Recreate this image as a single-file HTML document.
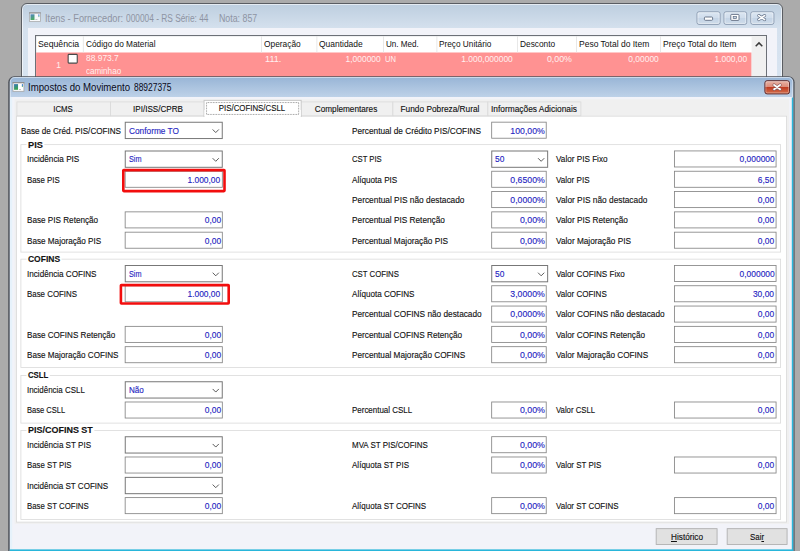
<!DOCTYPE html>
<html><head><meta charset="utf-8"><title>Impostos do Movimento</title>
<style>
html,body{margin:0;padding:0}
body{width:800px;height:551px;overflow:hidden;background:#ababab;position:relative;font-family:"Liberation Sans",sans-serif}
div,svg.abs{position:absolute;box-sizing:border-box}
.t{position:absolute;white-space:nowrap;line-height:12px;display:inline-block;color:#111;-webkit-text-stroke:0.13px currentColor}
.t.ns{-webkit-text-stroke:0}
.t.v{color:#2626c2}
.bw{left:21px;top:3px;width:761.6px;height:100px;border:1px solid #5a5d62;border-radius:6px 6px 0 0;background:linear-gradient(#bdcedf 0,#d5e1ee 25px,#d9e5f2 100%);box-shadow:inset 0 0 0 1px rgba(255,255,255,.6)}
.bwclient{left:27.5px;top:27.5px;width:749px;height:70px;background:#f2f3f9}
.fwclient{left:10px;top:97px;width:782px;height:453px;background:#f2f3f9;box-shadow:inset 2.2px 0 0 #e6f2fb}
</style></head>
<body>
<div class="bw"></div>
<div class="bwclient"></div>
<svg class="abs" style="left:0;top:0" width="800" height="551" viewBox="0 0 800 551"><defs><linearGradient id="ig" x1="0" y1="0" x2="0.3" y2="1"><stop offset="0" stop-color="#3a74bc"/><stop offset="1" stop-color="#38a44e"/></linearGradient></defs>
<g transform="translate(29,12.3)" opacity="0.85"><rect x="0.4" y="0.5" width="11" height="8.7" fill="#fff" stroke="#a4a4a4" stroke-width="0.8"/><rect x="0" y="0" width="11.8" height="1.2" fill="#8c8c8c"/>
<rect x="1.5" y="2" width="4" height="5.7" fill="url(#ig)"/><rect x="9.3" y="2" width="1.1" height="2" fill="#3f7fd0"/><rect x="9.3" y="4" width="1.1" height="0.8" fill="#4ab060"/><rect x="6.4" y="7" width="2" height="0.6" fill="#999"/></g>
<defs><linearGradient id="cg" x1="0" y1="0" x2="0" y2="1"><stop offset="0" stop-color="#dbe6f2"/><stop offset="0.48" stop-color="#d0ddec"/><stop offset="0.52" stop-color="#c4d4e6"/><stop offset="1" stop-color="#cfdcea"/></linearGradient></defs>
<rect x="697.0" y="11.8" width="23.10" height="12.6" rx="2" fill="url(#cg)" stroke="#8d9db3" stroke-width="1"/><rect x="697.95" y="12.75" width="21.20" height="10.7" rx="1.2" fill="none" stroke="#fff" stroke-opacity="0.5" stroke-width="0.9"/>
<rect x="724.0" y="11.8" width="22.70" height="12.6" rx="2" fill="url(#cg)" stroke="#8d9db3" stroke-width="1"/><rect x="724.95" y="12.75" width="20.80" height="10.7" rx="1.2" fill="none" stroke="#fff" stroke-opacity="0.5" stroke-width="0.9"/>
<rect x="750.8" y="11.8" width="23.10" height="12.6" rx="2" fill="url(#cg)" stroke="#8d9db3" stroke-width="1"/><rect x="751.75" y="12.75" width="21.20" height="10.7" rx="1.2" fill="none" stroke="#fff" stroke-opacity="0.5" stroke-width="0.9"/>
<g transform="translate(690,8)">
<rect x="14.4" y="9" width="8.2" height="3.3" rx="0.9" fill="#fff" stroke="#5d6b80" stroke-width="0.9"/>
<rect x="40.8" y="6.4" width="8.2" height="6" rx="0.8" fill="#fff" stroke="#5d6b80" stroke-width="0.9"/>
<rect x="43.2" y="8.5" width="3.4" height="2" fill="#c9d6e6" stroke="#5d6b80" stroke-width="0.7"/>
<g transform="translate(71.7,9.6)"><path d="M-2.9,-2 L2.9,2 M2.9,-2 L-2.9,2" fill="none" stroke="#66748a" stroke-width="3" stroke-linecap="round"/><path d="M-2.9,-2 L2.9,2 M2.9,-2 L-2.9,2" fill="none" stroke="#fff" stroke-width="1.7" stroke-linecap="round"/></g>
</g>
<rect x="35.55" y="35.55" width="730.90" height="58.90" fill="#fff" stroke="#6c7077" stroke-width="1.1" />
<rect x="36.10" y="52.50" width="715.50" height="40.00" fill="#ff9292" />
<rect x="751.60" y="36.10" width="14.30" height="56.00" fill="#f0f0f0" />
<path d="M755.7,46.2 L759,42.9 L762.3,46.2" fill="none" stroke="#3a3a3a" stroke-width="1.5" />
<rect x="82.90" y="36.10" width="0.80" height="16.40" fill="#e3e3e3" />
<rect x="261.00" y="36.10" width="0.80" height="16.40" fill="#e3e3e3" />
<rect x="316.50" y="36.10" width="0.80" height="16.40" fill="#e3e3e3" />
<rect x="383.00" y="36.10" width="0.80" height="16.40" fill="#e3e3e3" />
<rect x="436.50" y="36.10" width="0.80" height="16.40" fill="#e3e3e3" />
<rect x="517.00" y="36.10" width="0.80" height="16.40" fill="#e3e3e3" />
<rect x="576.00" y="36.10" width="0.80" height="16.40" fill="#e3e3e3" />
<rect x="660.00" y="36.10" width="0.80" height="16.40" fill="#e3e3e3" />
<rect x="68.15" y="54.35" width="9.10" height="8.80" fill="#fff" stroke="#484848" stroke-width="1.1" rx="0.8"/></svg>
<svg class="abs" style="left:0;top:0" width="800" height="551" viewBox="0 0 800 551"><defs><linearGradient id="tg" gradientUnits="userSpaceOnUse" x1="0" y1="77" x2="0" y2="97"><stop offset="0" stop-color="#98b5d6"/><stop offset="1" stop-color="#bdd1e8"/></linearGradient></defs>
<rect x="8.2" y="76.2" width="786.4" height="490" rx="6" fill="#50545c"/>
<rect x="9.8" y="77.05" width="783.4" height="490" rx="4.8" fill="url(#tg)"/>
<rect x="10.25" y="77.5" width="782.5" height="490" rx="4.4" fill="none" stroke="#fff" stroke-opacity="0.55" stroke-width="0.9"/></svg>
<div class="fwclient"></div>
<svg class="abs" style="left:0;top:0" width="800" height="551" viewBox="0 0 800 551"><rect x="791.80" y="97.60" width="1.45" height="454.00" fill="#29b6da" />
<rect x="9.80" y="549.40" width="783.40" height="1.70" fill="#29b6da" />
<defs><linearGradient id="ig2" x1="0" y1="0" x2="0.3" y2="1"><stop offset="0" stop-color="#3a74bc"/><stop offset="1" stop-color="#38a44e"/></linearGradient></defs>
<g transform="translate(12.55,82.1)" opacity="1"><rect x="0.4" y="0.5" width="11" height="8.7" fill="#fff" stroke="#a4a4a4" stroke-width="0.8"/><rect x="0" y="0" width="11.8" height="1.2" fill="#8c8c8c"/>
<rect x="1.5" y="2" width="4" height="5.7" fill="url(#ig)"/><rect x="9.3" y="2" width="1.1" height="2" fill="#3f7fd0"/><rect x="9.3" y="4" width="1.1" height="0.8" fill="#4ab060"/><rect x="6.4" y="7" width="2" height="0.6" fill="#999"/></g>
<defs><linearGradient id="xg" x1="0" y1="0" x2="0" y2="1"><stop offset="0" stop-color="#e9b3a6"/><stop offset="0.47" stop-color="#dc8c7a"/><stop offset="0.5" stop-color="#bf3b22"/><stop offset="1" stop-color="#d4714f"/></linearGradient></defs>
<rect x="764.9" y="80.7" width="24.6" height="13.2" rx="2.2" fill="url(#xg)" stroke="#5c2a2e" stroke-width="1"/>
<rect x="765.9" y="81.7" width="22.6" height="11.2" rx="1.4" fill="none" stroke="#fff" stroke-opacity="0.35" stroke-width="0.9"/>
<g transform="translate(777.1,87.1)"><path d="M-3,-2.2 L3,2.2 M3,-2.2 L-3,2.2" fill="none" stroke="#8a5a5a" stroke-width="3.1" stroke-linecap="round"/><path d="M-3,-2.2 L3,2.2 M3,-2.2 L-3,2.2" fill="none" stroke="#fff" stroke-width="1.8" stroke-linecap="round"/></g>
<rect x="14.60" y="99.30" width="774.40" height="424.60" fill="#f0f0f0" />
<rect x="16.40" y="116.15" width="770.20" height="405.95" fill="#fff" stroke="#d9d9d9" stroke-width="0.8" />
<rect x="16.90" y="101.90" width="93.50" height="13.90" fill="#f0f0f0" stroke="#d9d9d9" stroke-width="0.8" />
<rect x="110.40" y="101.90" width="95.20" height="13.90" fill="#f0f0f0" stroke="#d9d9d9" stroke-width="0.8" />
<rect x="300.40" y="101.90" width="92.50" height="13.90" fill="#f0f0f0" stroke="#d9d9d9" stroke-width="0.8" />
<rect x="392.90" y="101.90" width="95.00" height="13.90" fill="#f0f0f0" stroke="#d9d9d9" stroke-width="0.8" />
<rect x="487.90" y="101.90" width="93.00" height="13.90" fill="#f0f0f0" stroke="#d9d9d9" stroke-width="0.8" />
<rect x="204.05" y="100.35" width="97.10" height="16.10" fill="#fff" stroke="#c4c4c4" stroke-width="0.9" />
<rect x="204.40" y="110.00" width="96.40" height="8.00" fill="#fff" />
<rect x="206.55" y="102.55" width="92.10" height="11.90" fill="none" stroke="#666" stroke-width="0.7" stroke-dasharray="0.8 0.8"/>
<rect x="20.90" y="144.65" width="759.70" height="107.45" fill="none" stroke="#dadada" stroke-width="0.8" />
<rect x="26.50" y="143.25" width="17.84" height="3.00" fill="#fff" />
<rect x="20.90" y="259.15" width="759.70" height="108.45" fill="none" stroke="#dadada" stroke-width="0.8" />
<rect x="26.50" y="257.75" width="35.03" height="3.00" fill="#fff" />
<rect x="20.90" y="375.40" width="759.70" height="47.70" fill="none" stroke="#dadada" stroke-width="0.8" />
<rect x="26.50" y="374.00" width="23.31" height="3.00" fill="#fff" />
<rect x="20.90" y="430.40" width="759.70" height="89.20" fill="none" stroke="#dadada" stroke-width="0.8" />
<rect x="26.50" y="429.00" width="67.84" height="3.00" fill="#fff" />
<rect x="125.25" y="122.25" width="97.00" height="16.30" fill="#fff" stroke="#777" stroke-width="1" />
<path d="M212.65,129.45 L215.75,132.55 L218.85,129.45" fill="none" stroke="#484848" stroke-width="0.9" />
<rect x="491.68" y="122.17" width="54.55" height="16.05" fill="#fff" stroke="#858585" stroke-width="0.85" />
<rect x="125.25" y="151.00" width="97.00" height="16.30" fill="#fff" stroke="#777" stroke-width="1" />
<path d="M212.65,158.20 L215.75,161.30 L218.85,158.20" fill="none" stroke="#484848" stroke-width="0.9" />
<rect x="125.17" y="171.24" width="97.15" height="16.05" fill="#fff" stroke="#858585" stroke-width="0.85" />
<rect x="125.17" y="211.86" width="97.15" height="16.05" fill="#fff" stroke="#858585" stroke-width="0.85" />
<rect x="125.17" y="232.18" width="97.15" height="16.05" fill="#fff" stroke="#858585" stroke-width="0.85" />
<rect x="491.75" y="151.00" width="55.90" height="16.30" fill="#fff" stroke="#777" stroke-width="1" />
<path d="M538.05,158.20 L541.15,161.30 L544.25,158.20" fill="none" stroke="#484848" stroke-width="0.9" />
<rect x="491.68" y="171.24" width="54.55" height="16.05" fill="#fff" stroke="#858585" stroke-width="0.85" />
<rect x="491.68" y="191.55" width="54.55" height="16.05" fill="#fff" stroke="#858585" stroke-width="0.85" />
<rect x="491.68" y="211.86" width="54.55" height="16.05" fill="#fff" stroke="#858585" stroke-width="0.85" />
<rect x="491.68" y="232.18" width="54.55" height="16.05" fill="#fff" stroke="#858585" stroke-width="0.85" />
<rect x="674.42" y="150.93" width="101.65" height="16.05" fill="#fff" stroke="#858585" stroke-width="0.85" />
<rect x="674.42" y="171.24" width="101.65" height="16.05" fill="#fff" stroke="#858585" stroke-width="0.85" />
<rect x="674.42" y="191.55" width="101.65" height="16.05" fill="#fff" stroke="#858585" stroke-width="0.85" />
<rect x="674.42" y="211.86" width="101.65" height="16.05" fill="#fff" stroke="#858585" stroke-width="0.85" />
<rect x="674.42" y="232.18" width="101.65" height="16.05" fill="#fff" stroke="#858585" stroke-width="0.85" />
<rect x="123.30" y="170.10" width="101.20" height="21.00" fill="none" stroke="#f20d0d" stroke-width="2.6" rx="0.5"/>
<rect x="125.25" y="265.50" width="97.00" height="16.30" fill="#fff" stroke="#777" stroke-width="1" />
<path d="M212.65,272.70 L215.75,275.80 L218.85,272.70" fill="none" stroke="#484848" stroke-width="0.9" />
<rect x="125.17" y="285.74" width="97.15" height="16.05" fill="#fff" stroke="#858585" stroke-width="0.85" />
<rect x="125.17" y="326.36" width="97.15" height="16.05" fill="#fff" stroke="#858585" stroke-width="0.85" />
<rect x="125.17" y="346.68" width="97.15" height="16.05" fill="#fff" stroke="#858585" stroke-width="0.85" />
<rect x="491.75" y="265.50" width="55.90" height="16.30" fill="#fff" stroke="#777" stroke-width="1" />
<path d="M538.05,272.70 L541.15,275.80 L544.25,272.70" fill="none" stroke="#484848" stroke-width="0.9" />
<rect x="491.68" y="285.74" width="54.55" height="16.05" fill="#fff" stroke="#858585" stroke-width="0.85" />
<rect x="491.68" y="306.05" width="54.55" height="16.05" fill="#fff" stroke="#858585" stroke-width="0.85" />
<rect x="491.68" y="326.36" width="54.55" height="16.05" fill="#fff" stroke="#858585" stroke-width="0.85" />
<rect x="491.68" y="346.68" width="54.55" height="16.05" fill="#fff" stroke="#858585" stroke-width="0.85" />
<rect x="674.42" y="265.43" width="101.65" height="16.05" fill="#fff" stroke="#858585" stroke-width="0.85" />
<rect x="674.42" y="285.74" width="101.65" height="16.05" fill="#fff" stroke="#858585" stroke-width="0.85" />
<rect x="674.42" y="306.05" width="101.65" height="16.05" fill="#fff" stroke="#858585" stroke-width="0.85" />
<rect x="674.42" y="326.36" width="101.65" height="16.05" fill="#fff" stroke="#858585" stroke-width="0.85" />
<rect x="674.42" y="346.68" width="101.65" height="16.05" fill="#fff" stroke="#858585" stroke-width="0.85" />
<rect x="120.90" y="285.10" width="107.80" height="18.40" fill="none" stroke="#f20d0d" stroke-width="2.6" rx="0.5"/>
<rect x="125.25" y="381.75" width="97.00" height="16.30" fill="#fff" stroke="#777" stroke-width="1" />
<path d="M212.65,388.95 L215.75,392.05 L218.85,388.95" fill="none" stroke="#484848" stroke-width="0.9" />
<rect x="125.17" y="401.99" width="97.15" height="16.05" fill="#fff" stroke="#858585" stroke-width="0.85" />
<rect x="491.68" y="401.99" width="54.55" height="16.05" fill="#fff" stroke="#858585" stroke-width="0.85" />
<rect x="674.42" y="401.99" width="101.65" height="16.05" fill="#fff" stroke="#858585" stroke-width="0.85" />
<rect x="125.25" y="436.75" width="97.00" height="16.30" fill="#fff" stroke="#777" stroke-width="1" />
<path d="M212.65,443.95 L215.75,447.05 L218.85,443.95" fill="none" stroke="#484848" stroke-width="0.9" />
<rect x="125.17" y="456.99" width="97.15" height="16.05" fill="#fff" stroke="#858585" stroke-width="0.85" />
<rect x="125.25" y="477.38" width="97.00" height="16.30" fill="#fff" stroke="#777" stroke-width="1" />
<path d="M212.65,484.57 L215.75,487.68 L218.85,484.57" fill="none" stroke="#484848" stroke-width="0.9" />
<rect x="125.17" y="497.61" width="97.15" height="16.05" fill="#fff" stroke="#858585" stroke-width="0.85" />
<rect x="491.68" y="436.68" width="54.55" height="16.05" fill="#fff" stroke="#858585" stroke-width="0.85" />
<rect x="491.68" y="456.99" width="54.55" height="16.05" fill="#fff" stroke="#858585" stroke-width="0.85" />
<rect x="491.68" y="497.61" width="54.55" height="16.05" fill="#fff" stroke="#858585" stroke-width="0.85" />
<rect x="674.42" y="456.99" width="101.65" height="16.05" fill="#fff" stroke="#858585" stroke-width="0.85" />
<rect x="674.42" y="497.61" width="101.65" height="16.05" fill="#fff" stroke="#858585" stroke-width="0.85" />
<rect x="656.17" y="528.67" width="60.90" height="15.90" fill="#e1e1e1" stroke="#adadad" stroke-width="0.85" />
<rect x="727.17" y="528.67" width="59.90" height="15.90" fill="#e1e1e1" stroke="#adadad" stroke-width="0.85" /></svg>
<span class="t ns" style="top:12.54px;font-size:10px;color:#8e94a3;left:44.70px;transform-origin:0 50%;transform:scaleX(0.9244);">Itens - Fornecedor:</span>
<span class="t ns" style="top:12.54px;font-size:10px;color:#8e94a3;left:125.70px;transform-origin:0 50%;transform:scaleX(0.8337);">000004 - RS Série: 44</span>
<span class="t ns" style="top:12.54px;font-size:10px;color:#8e94a3;left:218.80px;transform-origin:0 50%;transform:scaleX(0.8807);">Nota: 857</span>
<span class="t ns" style="top:38.45px;font-size:8.8px;color:#111;left:38.30px;transform-origin:0 50%;transform:scaleX(0.9909);">Sequência</span>
<span class="t ns" style="top:38.45px;font-size:8.8px;color:#111;left:86.00px;transform-origin:0 50%;transform:scaleX(0.9416);">Código do Material</span>
<span class="t ns" style="top:38.45px;font-size:8.8px;color:#111;left:263.50px;transform-origin:0 50%;transform:scaleX(0.9503);">Operação</span>
<span class="t ns" style="top:38.45px;font-size:8.8px;color:#111;left:319.00px;transform-origin:0 50%;transform:scaleX(0.9615);">Quantidade</span>
<span class="t ns" style="top:38.45px;font-size:8.8px;color:#111;left:385.50px;transform-origin:0 50%;transform:scaleX(0.9190);">Un. Med.</span>
<span class="t ns" style="top:38.45px;font-size:8.8px;color:#111;left:439.00px;transform-origin:0 50%;transform:scaleX(0.9389);">Preço Unitário</span>
<span class="t ns" style="top:38.45px;font-size:8.8px;color:#111;left:519.50px;transform-origin:0 50%;transform:scaleX(0.9458);">Desconto</span>
<span class="t ns" style="top:38.45px;font-size:8.8px;color:#111;left:578.50px;transform-origin:0 50%;transform:scaleX(0.9671);">Peso Total do Item</span>
<span class="t ns" style="top:38.45px;font-size:8.8px;color:#111;left:662.50px;transform-origin:0 50%;transform:scaleX(0.9709);">Preço Total do Item</span>
<span class="t ns" style="top:58.95px;font-size:8.8px;color:#fff0f0;right:739.00px;transform-origin:100% 50%;transform:scaleX(0.9554);">1</span>
<span class="t ns" style="top:52.35px;font-size:8.8px;color:#fff0f0;left:86.00px;transform-origin:0 50%;transform:scaleX(0.9580);">88.973.7</span>
<span class="t ns" style="top:64.95px;font-size:8.8px;color:#fff0f0;left:86.00px;transform-origin:0 50%;transform:scaleX(0.9214);">caminhao</span>
<span class="t ns" style="top:52.95px;font-size:8.8px;color:#fff0f0;left:264.50px;transform-origin:0 50%;transform:scaleX(1.0365);">111.</span>
<span class="t ns" style="top:52.95px;font-size:8.8px;color:#fff0f0;right:419.50px;transform-origin:100% 50%;transform:scaleX(0.9579);">1,000000</span>
<span class="t ns" style="top:52.95px;font-size:8.8px;color:#fff0f0;left:384.50px;transform-origin:0 50%;transform:scaleX(0.8600);">UN</span>
<span class="t ns" style="top:52.95px;font-size:8.8px;color:#fff0f0;right:287.00px;transform-origin:100% 50%;transform:scaleX(0.9582);">1.000,000000</span>
<span class="t ns" style="top:52.95px;font-size:8.8px;color:#fff0f0;right:228.00px;transform-origin:100% 50%;transform:scaleX(1.0019);">0,00%</span>
<span class="t ns" style="top:52.95px;font-size:8.8px;color:#fff0f0;right:141.00px;transform-origin:100% 50%;transform:scaleX(0.9578);">0,00000</span>
<span class="t ns" style="top:52.95px;font-size:8.8px;color:#fff0f0;right:53.00px;transform-origin:100% 50%;transform:scaleX(0.9580);">1.000,00</span>
<span class="t ns" style="top:81.53px;font-size:10px;color:#0a0a20;left:28.40px;transform-origin:0 50%;transform:scaleX(0.9616);">Impostos do Movimento</span>
<span class="t ns" style="top:81.53px;font-size:10px;color:#0a0a20;left:133.70px;transform-origin:0 50%;transform:scaleX(0.8427);">88927375</span>
<span class="t " style="top:103.25px;font-size:8.8px;color:#111;left:63.25px;transform-origin:50% 50%;transform:translateX(-50%) scaleX(0.8878);">ICMS</span>
<span class="t " style="top:103.25px;font-size:8.8px;color:#111;left:157.60px;transform-origin:50% 50%;transform:translateX(-50%) scaleX(0.9214);">IPI/ISS/CPRB</span>
<span class="t " style="top:103.25px;font-size:8.8px;color:#111;left:346.25px;transform-origin:50% 50%;transform:translateX(-50%) scaleX(0.9331);">Complementares</span>
<span class="t " style="top:103.25px;font-size:8.8px;color:#111;left:440.00px;transform-origin:50% 50%;transform:translateX(-50%) scaleX(0.9436);">Fundo Pobreza/Rural</span>
<span class="t " style="top:103.25px;font-size:8.8px;color:#111;left:534.00px;transform-origin:50% 50%;transform:translateX(-50%) scaleX(0.9499);">Informações Adicionais</span>
<span class="t " style="top:101.65px;font-size:8.8px;color:#111;left:251.60px;transform-origin:50% 50%;transform:translateX(-50%) scaleX(0.8936);">PIS/COFINS/CSLL</span>
<span class="t " style="top:138.70px;font-size:8.8px;font-weight:bold;color:#111;left:28.00px;transform-origin:0 50%;transform:scaleX(1.0463);">PIS</span>
<span class="t " style="top:253.20px;font-size:8.8px;font-weight:bold;color:#111;left:28.00px;transform-origin:0 50%;transform:scaleX(0.9638);">COFINS</span>
<span class="t " style="top:369.45px;font-size:8.8px;font-weight:bold;color:#111;left:28.00px;transform-origin:0 50%;transform:scaleX(0.8844);">CSLL</span>
<span class="t " style="top:424.45px;font-size:8.8px;font-weight:bold;color:#111;left:28.00px;transform-origin:0 50%;transform:scaleX(1.0204);">PIS/COFINS ST</span>
<span class="t " style="top:124.60px;font-size:8.8px;color:#111;left:20.50px;transform-origin:0 50%;transform:scaleX(0.9213);">Base de Créd. PIS/COFINS</span>
<span class="t v" style="top:124.60px;font-size:8.8px;left:128.75px;transform-origin:0 50%;transform:scaleX(0.9440);">Conforme TO</span>
<span class="t " style="top:124.60px;font-size:8.8px;color:#111;left:351.75px;transform-origin:0 50%;transform:scaleX(0.9382);">Percentual de Crédito PIS/COFINS</span>
<span class="t v" style="top:124.60px;font-size:8.8px;right:255.45px;transform-origin:100% 50%;transform:scaleX(0.9897);">100,00%</span>
<span class="t " style="top:153.35px;font-size:8.8px;color:#111;left:27.00px;transform-origin:0 50%;transform:scaleX(0.9306);">Incidência PIS</span>
<span class="t v" style="top:153.35px;font-size:8.8px;left:128.75px;transform-origin:0 50%;transform:scaleX(0.8247);">Sim</span>
<span class="t " style="top:173.66px;font-size:8.8px;color:#111;left:27.00px;transform-origin:0 50%;transform:scaleX(0.8944);">Base PIS</span>
<span class="t v" style="top:173.66px;font-size:8.8px;right:579.35px;transform-origin:100% 50%;transform:scaleX(0.9580);">1.000,00</span>
<span class="t " style="top:214.29px;font-size:8.8px;color:#111;left:27.00px;transform-origin:0 50%;transform:scaleX(0.9259);">Base PIS Retenção</span>
<span class="t v" style="top:214.29px;font-size:8.8px;right:579.35px;transform-origin:100% 50%;transform:scaleX(0.9580);">0,00</span>
<span class="t " style="top:234.60px;font-size:8.8px;color:#111;left:27.00px;transform-origin:0 50%;transform:scaleX(0.9254);">Base Majoração PIS</span>
<span class="t v" style="top:234.60px;font-size:8.8px;right:579.35px;transform-origin:100% 50%;transform:scaleX(0.9580);">0,00</span>
<span class="t " style="top:153.35px;font-size:8.8px;color:#111;left:351.75px;transform-origin:0 50%;transform:scaleX(0.8716);">CST PIS</span>
<span class="t v" style="top:153.35px;font-size:8.8px;left:495.25px;transform-origin:0 50%;transform:scaleX(0.9569);">50</span>
<span class="t " style="top:173.66px;font-size:8.8px;color:#111;left:351.75px;transform-origin:0 50%;transform:scaleX(0.9265);">Alíquota PIS</span>
<span class="t v" style="top:173.66px;font-size:8.8px;right:255.45px;transform-origin:100% 50%;transform:scaleX(0.9897);">0,6500%</span>
<span class="t " style="top:193.98px;font-size:8.8px;color:#111;left:351.75px;transform-origin:0 50%;transform:scaleX(0.9466);">Percentual PIS não destacado</span>
<span class="t v" style="top:193.98px;font-size:8.8px;right:255.45px;transform-origin:100% 50%;transform:scaleX(0.9897);">0,0000%</span>
<span class="t " style="top:214.29px;font-size:8.8px;color:#111;left:351.75px;transform-origin:0 50%;transform:scaleX(0.9412);">Percentual PIS Retenção</span>
<span class="t v" style="top:214.29px;font-size:8.8px;right:255.45px;transform-origin:100% 50%;transform:scaleX(1.0019);">0,00%</span>
<span class="t " style="top:234.60px;font-size:8.8px;color:#111;left:351.75px;transform-origin:0 50%;transform:scaleX(0.9402);">Percentual Majoração PIS</span>
<span class="t v" style="top:234.60px;font-size:8.8px;right:255.45px;transform-origin:100% 50%;transform:scaleX(1.0019);">0,00%</span>
<span class="t " style="top:153.35px;font-size:8.8px;color:#111;left:555.75px;transform-origin:0 50%;transform:scaleX(0.9277);">Valor PIS Fixo</span>
<span class="t v" style="top:153.35px;font-size:8.8px;right:25.60px;transform-origin:100% 50%;transform:scaleX(0.9579);">0,000000</span>
<span class="t " style="top:173.66px;font-size:8.8px;color:#111;left:555.75px;transform-origin:0 50%;transform:scaleX(0.9200);">Valor PIS</span>
<span class="t v" style="top:173.66px;font-size:8.8px;right:25.60px;transform-origin:100% 50%;transform:scaleX(0.9580);">6,50</span>
<span class="t " style="top:193.98px;font-size:8.8px;color:#111;left:555.75px;transform-origin:0 50%;transform:scaleX(0.9455);">Valor PIS não destacado</span>
<span class="t v" style="top:193.98px;font-size:8.8px;right:25.60px;transform-origin:100% 50%;transform:scaleX(0.9580);">0,00</span>
<span class="t " style="top:214.29px;font-size:8.8px;color:#111;left:555.75px;transform-origin:0 50%;transform:scaleX(0.9382);">Valor PIS Retenção</span>
<span class="t v" style="top:214.29px;font-size:8.8px;right:25.60px;transform-origin:100% 50%;transform:scaleX(0.9580);">0,00</span>
<span class="t " style="top:234.60px;font-size:8.8px;color:#111;left:555.75px;transform-origin:0 50%;transform:scaleX(0.9371);">Valor Majoração PIS</span>
<span class="t v" style="top:234.60px;font-size:8.8px;right:25.60px;transform-origin:100% 50%;transform:scaleX(0.9580);">0,00</span>
<span class="t " style="top:267.85px;font-size:8.8px;color:#111;left:27.00px;transform-origin:0 50%;transform:scaleX(0.9234);">Incidência COFINS</span>
<span class="t v" style="top:267.85px;font-size:8.8px;left:128.75px;transform-origin:0 50%;transform:scaleX(0.8247);">Sim</span>
<span class="t " style="top:288.16px;font-size:8.8px;color:#111;left:27.00px;transform-origin:0 50%;transform:scaleX(0.8971);">Base COFINS</span>
<span class="t v" style="top:288.16px;font-size:8.8px;right:579.35px;transform-origin:100% 50%;transform:scaleX(0.9580);">1.000,00</span>
<span class="t " style="top:328.79px;font-size:8.8px;color:#111;left:27.00px;transform-origin:0 50%;transform:scaleX(0.9211);">Base COFINS Retenção</span>
<span class="t v" style="top:328.79px;font-size:8.8px;right:579.35px;transform-origin:100% 50%;transform:scaleX(0.9580);">0,00</span>
<span class="t " style="top:349.10px;font-size:8.8px;color:#111;left:27.00px;transform-origin:0 50%;transform:scaleX(0.9210);">Base Majoração COFINS</span>
<span class="t v" style="top:349.10px;font-size:8.8px;right:579.35px;transform-origin:100% 50%;transform:scaleX(0.9580);">0,00</span>
<span class="t " style="top:267.85px;font-size:8.8px;color:#111;left:351.75px;transform-origin:0 50%;transform:scaleX(0.8824);">CST COFINS</span>
<span class="t v" style="top:267.85px;font-size:8.8px;left:495.25px;transform-origin:0 50%;transform:scaleX(0.9569);">50</span>
<span class="t " style="top:288.16px;font-size:8.8px;color:#111;left:351.75px;transform-origin:0 50%;transform:scaleX(0.9195);">Alíquota COFINS</span>
<span class="t v" style="top:288.16px;font-size:8.8px;right:255.45px;transform-origin:100% 50%;transform:scaleX(0.9897);">3,0000%</span>
<span class="t " style="top:308.48px;font-size:8.8px;color:#111;left:351.75px;transform-origin:0 50%;transform:scaleX(0.9404);">Percentual COFINS não destacado</span>
<span class="t v" style="top:308.48px;font-size:8.8px;right:255.45px;transform-origin:100% 50%;transform:scaleX(0.9897);">0,0000%</span>
<span class="t " style="top:328.79px;font-size:8.8px;color:#111;left:351.75px;transform-origin:0 50%;transform:scaleX(0.9348);">Percentual COFINS Retenção</span>
<span class="t v" style="top:328.79px;font-size:8.8px;right:255.45px;transform-origin:100% 50%;transform:scaleX(1.0019);">0,00%</span>
<span class="t " style="top:349.10px;font-size:8.8px;color:#111;left:351.75px;transform-origin:0 50%;transform:scaleX(0.9343);">Percentual Majoração COFINS</span>
<span class="t v" style="top:349.10px;font-size:8.8px;right:255.45px;transform-origin:100% 50%;transform:scaleX(1.0019);">0,00%</span>
<span class="t " style="top:267.85px;font-size:8.8px;color:#111;left:555.75px;transform-origin:0 50%;transform:scaleX(0.9213);">Valor COFINS Fixo</span>
<span class="t v" style="top:267.85px;font-size:8.8px;right:25.60px;transform-origin:100% 50%;transform:scaleX(0.9579);">0,000000</span>
<span class="t " style="top:288.16px;font-size:8.8px;color:#111;left:555.75px;transform-origin:0 50%;transform:scaleX(0.9139);">Valor COFINS</span>
<span class="t v" style="top:288.16px;font-size:8.8px;right:25.60px;transform-origin:100% 50%;transform:scaleX(0.9581);">30,00</span>
<span class="t " style="top:308.48px;font-size:8.8px;color:#111;left:555.75px;transform-origin:0 50%;transform:scaleX(0.9383);">Valor COFINS não destacado</span>
<span class="t v" style="top:308.48px;font-size:8.8px;right:25.60px;transform-origin:100% 50%;transform:scaleX(0.9580);">0,00</span>
<span class="t " style="top:328.79px;font-size:8.8px;color:#111;left:555.75px;transform-origin:0 50%;transform:scaleX(0.9309);">Valor COFINS Retenção</span>
<span class="t v" style="top:328.79px;font-size:8.8px;right:25.60px;transform-origin:100% 50%;transform:scaleX(0.9580);">0,00</span>
<span class="t " style="top:349.10px;font-size:8.8px;color:#111;left:555.75px;transform-origin:0 50%;transform:scaleX(0.9305);">Valor Majoração COFINS</span>
<span class="t v" style="top:349.10px;font-size:8.8px;right:25.60px;transform-origin:100% 50%;transform:scaleX(0.9580);">0,00</span>
<span class="t " style="top:384.10px;font-size:8.8px;color:#111;left:27.00px;transform-origin:0 50%;transform:scaleX(0.9024);">Incidência CSLL</span>
<span class="t v" style="top:384.10px;font-size:8.8px;left:128.75px;transform-origin:0 50%;transform:scaleX(0.9197);">Não</span>
<span class="t " style="top:404.41px;font-size:8.8px;color:#111;left:27.00px;transform-origin:0 50%;transform:scaleX(0.8603);">Base CSLL</span>
<span class="t v" style="top:404.41px;font-size:8.8px;right:579.35px;transform-origin:100% 50%;transform:scaleX(0.9580);">0,00</span>
<span class="t " style="top:404.41px;font-size:8.8px;color:#111;left:351.75px;transform-origin:0 50%;transform:scaleX(0.9044);">Percentual CSLL</span>
<span class="t v" style="top:404.41px;font-size:8.8px;right:255.45px;transform-origin:100% 50%;transform:scaleX(1.0019);">0,00%</span>
<span class="t " style="top:404.41px;font-size:8.8px;color:#111;left:555.75px;transform-origin:0 50%;transform:scaleX(0.8809);">Valor CSLL</span>
<span class="t v" style="top:404.41px;font-size:8.8px;right:25.60px;transform-origin:100% 50%;transform:scaleX(0.9580);">0,00</span>
<span class="t " style="top:439.10px;font-size:8.8px;color:#111;left:27.00px;transform-origin:0 50%;transform:scaleX(0.9183);">Incidência ST PIS</span>
<span class="t " style="top:459.41px;font-size:8.8px;color:#111;left:27.00px;transform-origin:0 50%;transform:scaleX(0.8870);">Base ST PIS</span>
<span class="t v" style="top:459.41px;font-size:8.8px;right:579.35px;transform-origin:100% 50%;transform:scaleX(0.9580);">0,00</span>
<span class="t " style="top:479.73px;font-size:8.8px;color:#111;left:27.00px;transform-origin:0 50%;transform:scaleX(0.9147);">Incidência ST COFINS</span>
<span class="t " style="top:500.04px;font-size:8.8px;color:#111;left:27.00px;transform-origin:0 50%;transform:scaleX(0.8910);">Base ST COFINS</span>
<span class="t v" style="top:500.04px;font-size:8.8px;right:579.35px;transform-origin:100% 50%;transform:scaleX(0.9580);">0,00</span>
<span class="t " style="top:439.10px;font-size:8.8px;color:#111;left:351.75px;transform-origin:0 50%;transform:scaleX(0.9047);">MVA ST PIS/COFINS</span>
<span class="t v" style="top:439.10px;font-size:8.8px;right:255.45px;transform-origin:100% 50%;transform:scaleX(1.0019);">0,00%</span>
<span class="t " style="top:459.41px;font-size:8.8px;color:#111;left:351.75px;transform-origin:0 50%;transform:scaleX(0.9134);">Alíquota ST PIS</span>
<span class="t v" style="top:459.41px;font-size:8.8px;right:255.45px;transform-origin:100% 50%;transform:scaleX(1.0019);">0,00%</span>
<span class="t " style="top:500.04px;font-size:8.8px;color:#111;left:351.75px;transform-origin:0 50%;transform:scaleX(0.9108);">Alíquota ST COFINS</span>
<span class="t v" style="top:500.04px;font-size:8.8px;right:255.45px;transform-origin:100% 50%;transform:scaleX(1.0019);">0,00%</span>
<span class="t " style="top:459.41px;font-size:8.8px;color:#111;left:555.75px;transform-origin:0 50%;transform:scaleX(0.9054);">Valor ST PIS</span>
<span class="t v" style="top:459.41px;font-size:8.8px;right:25.60px;transform-origin:100% 50%;transform:scaleX(0.9580);">0,00</span>
<span class="t " style="top:500.04px;font-size:8.8px;color:#111;left:555.75px;transform-origin:0 50%;transform:scaleX(0.9046);">Valor ST COFINS</span>
<span class="t v" style="top:500.04px;font-size:8.8px;right:25.60px;transform-origin:100% 50%;transform:scaleX(0.9580);">0,00</span>
<span class="t " style="top:530.55px;font-size:8.8px;color:#111;left:686.62px;transform-origin:50% 50%;transform:translateX(-50%) scaleX(0.9356);"><u>H</u>istórico</span>
<span class="t " style="top:530.55px;font-size:8.8px;color:#111;left:757.12px;transform-origin:50% 50%;transform:translateX(-50%) scaleX(0.8982);">Sai<u>r</u></span>
</body></html>
